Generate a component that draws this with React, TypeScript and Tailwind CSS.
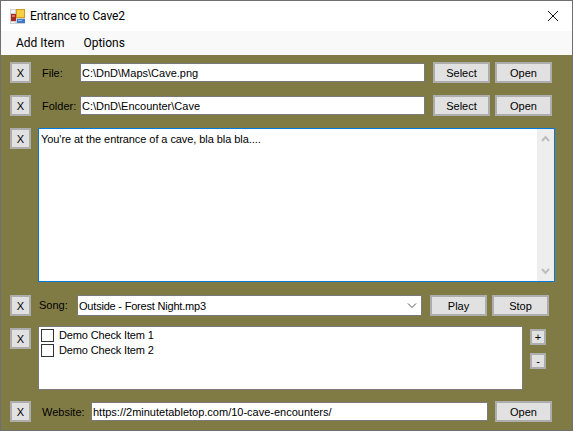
const fontStack = "[font-family:'Roboto','Noto_Sans',sans-serif]";
const formFont = "[font-family:'Liberation_Sans',Arial,sans-serif]";

function WinButton({ label, className }: { label: string; className: string }) {
  return (
    <button className={`flex shrink-0 items-center justify-center border-2 border-[#adadad] bg-[#e1e1e1] pt-[1px] text-[11px] leading-none text-black ${className}`}>
      {label}
    </button>
  );
}

function RemoveButton({ className = '' }: { className?: string }) {
  return <WinButton label="X" className={`h-[21px] w-[21px] ${className}`} />;
}

function TextBox({ value, className }: { value: string; className: string }) {
  return (
    <div className={`flex h-[19px] shrink-0 items-center border border-[#7a7a7a] bg-white pl-[1px] pt-[1px] text-[11px] text-black ${className}`}>
      {value}
    </div>
  );
}

function AppIcon() {
  return (
    <svg width="15" height="15" viewBox="0 0 15 15" className="shrink-0">
      <rect x="0" y="0" width="15" height="15" fill="#d0d0d0" />
      <rect x="1" y="1" width="4" height="3" fill="#f4f4f4" />
      <rect x="1" y="13" width="4" height="1" fill="#f4f4f4" />
      <rect x="6" y="0" width="9" height="9" fill="#d49a1c" />
      <rect x="7" y="1" width="7" height="7" fill="#f6cf45" />
      <rect x="1" y="5" width="5" height="7" fill="#a52a22" />
      <rect x="2" y="6" width="3" height="2" fill="#e0705a" />
      <rect x="7" y="10" width="8" height="4" fill="#3f78c8" />
      <rect x="8" y="11" width="4" height="1" fill="#9cc0ee" />
    </svg>
  );
}

function CheckItem({ label }: { label: string }) {
  return (
    <div className="flex h-[15px] items-center">
      <span className="h-[13px] w-[13px] shrink-0 border border-[#333333] bg-white" />
      <span className="ml-[5px] text-[11px] leading-[15px] tracking-[-0.15px] text-black">{label}</span>
    </div>
  );
}

export default function App() {
  return (
    <div className={`flex h-[431px] w-[573px] flex-col overflow-hidden border border-b-0 border-[#6f6f6f] bg-white ${fontStack}`}>
      {/* title bar */}
      <div className="flex h-[30px] shrink-0 items-center bg-white pl-[9px] pr-[13px]">
        <AppIcon />
        <span className="ml-[5px] text-[12px] tracking-[-0.1px] text-black">Entrance to Cave2</span>
        <svg width="12" height="12" viewBox="0 0 12 12" className="ml-auto" stroke="#111" strokeWidth="1" fill="none">
          <path d="M1 1 L11 11 M11 1 L1 11" />
        </svg>
      </div>

      {/* menu */}
      <div className="flex h-[24px] shrink-0 items-center gap-[19px] bg-[#f9f9f9] pl-[15px] text-[12px] text-black">
        <span>Add Item</span>
        <span>Options</span>
      </div>

      {/* form */}
      <div className={`flex flex-1 flex-col border-b border-[#6f6f6f] bg-[#807b45] pl-[9px] pt-[7px] text-[11px] text-black ${formFont}`}>
        <div className="flex h-[21px] items-center">
          <RemoveButton />
          <span className="ml-[11px] w-[38px] pt-[1px]">File:</span>
          <TextBox value="C:\DnD\Maps\Cave.png" className="w-[345px]" />
          <WinButton label="Select" className="ml-[8px] h-[21px] w-[57px]" />
          <WinButton label="Open" className="ml-[5px] h-[21px] w-[57px]" />
        </div>

        <div className="mt-[12px] flex h-[21px] items-center">
          <RemoveButton />
          <span className="ml-[11px] w-[38px] pt-[1px]">Folder:</span>
          <TextBox value="C:\DnD\Encounter\Cave" className="w-[345px]" />
          <WinButton label="Select" className="ml-[8px] h-[21px] w-[57px]" />
          <WinButton label="Open" className="ml-[5px] h-[21px] w-[57px]" />
        </div>

        <div className="mt-[12px] flex h-[154px] items-start">
          <RemoveButton />
          <div className="ml-[7px] flex h-[154px] w-[517px] border border-[#0078d7] bg-white">
            <div className="flex-1 pl-[2px] pt-[2px] tracking-[-0.07px]">You're at the entrance of a cave, bla bla bla....</div>
            <div className="flex w-[17px] flex-col items-center justify-between bg-[#eeeeee] py-[6px]">
              <svg width="9" height="7" viewBox="0 0 9 7" fill="none" stroke="#bdbdbd" strokeWidth="2"><path d="M1 6 L4.5 2 L8 6" /></svg>
              <svg width="9" height="7" viewBox="0 0 9 7" fill="none" stroke="#bdbdbd" strokeWidth="2"><path d="M1 1 L4.5 5 L8 1" /></svg>
            </div>
          </div>
        </div>

        <div className="mt-[13px] flex h-[21px] items-center">
          <RemoveButton />
          <span className="ml-[8px] w-[38px]">Song:</span>
          <div className="flex h-[21px] w-[345px] shrink-0 items-center justify-between border border-[#7a7a7a] bg-white pl-[1px] pr-[4px]">
            <span className="pt-[1px] tracking-[-0.2px]">Outside - Forest Night.mp3</span>
            <svg width="10" height="6" viewBox="0 0 10 6" fill="none" stroke="#555" strokeWidth="1"><path d="M1 0.5 L5 4.5 L9 0.5" /></svg>
          </div>
          <WinButton label="Play" className="ml-[8px] h-[21px] w-[57px]" />
          <WinButton label="Stop" className="ml-[5px] h-[21px] w-[57px]" />
        </div>

        <div className="mt-[10px] flex h-[64px] items-start">
          <RemoveButton className="mt-[2px]" />
          <div className="ml-[7px] h-[64px] w-[485px] border border-[#7a7a7a] bg-white pl-[2px] pt-[1px]">
            <CheckItem label="Demo Check Item 1" />
            <CheckItem label="Demo Check Item 2" />
          </div>
          <div className="ml-[7px] mt-[3px] flex flex-col gap-[8px]">
            <WinButton label="+" className="h-[16px] w-[16px]" />
            <WinButton label="-" className="h-[16px] w-[16px]" />
          </div>
        </div>

        <div className="mt-[11px] flex h-[21px] items-center">
          <RemoveButton />
          <span className="ml-[11px] w-[49px] pt-[1px]">Website:</span>
          <TextBox value="https://2minutetabletop.com/10-cave-encounters/" className="w-[397px]" />
          <WinButton label="Open" className="ml-[7px] h-[21px] w-[57px]" />
        </div>
      </div>
    </div>
  );
}
